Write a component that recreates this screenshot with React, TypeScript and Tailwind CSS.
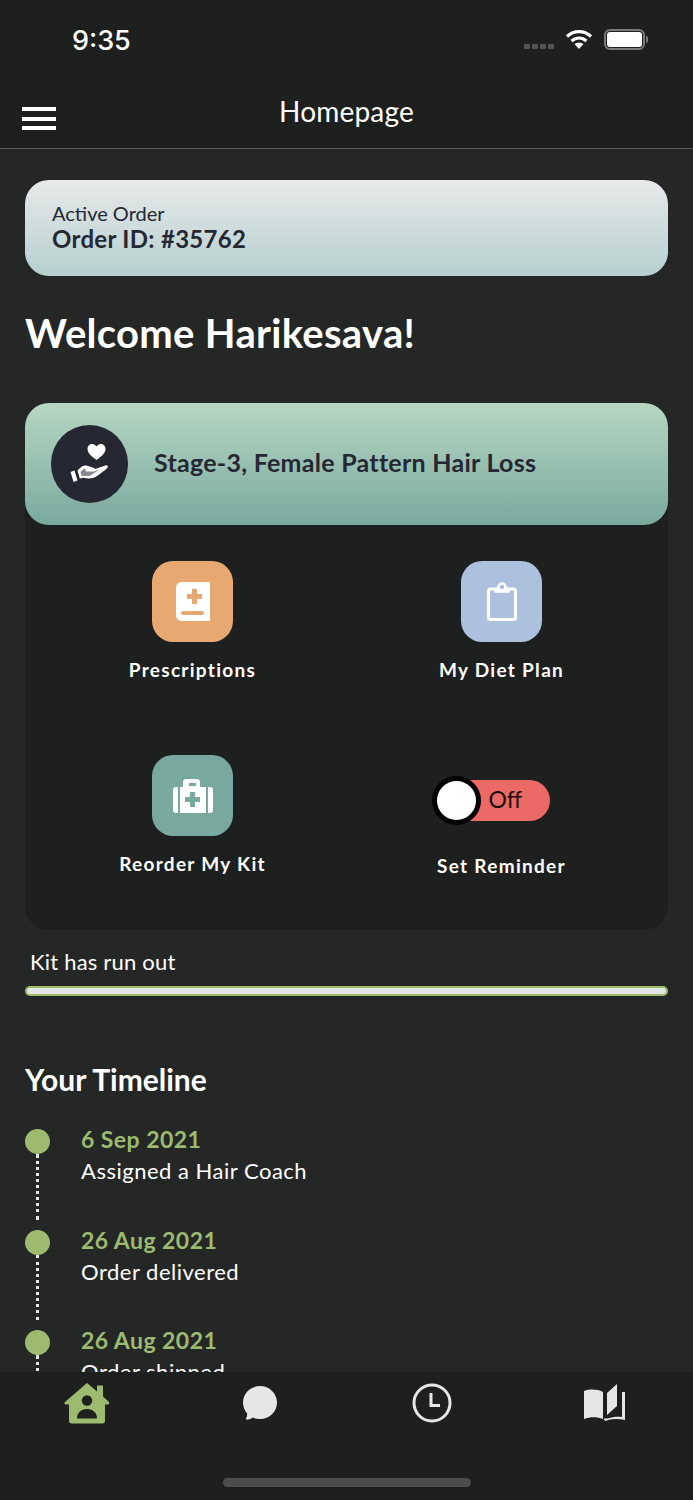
import React from 'react';

const font = { fontFamily: 'Lato, "Noto Sans", sans-serif' };

function Wifi() {
  return (
    <svg width="28" height="22" viewBox="0 0 28 22" fill="none" stroke="white" strokeWidth="3.2">
      <path d="M2 8.500C9 2 19 2 26 8.500" />
      <path d="M6.500 13C11 9 17 9 21.500 13" />
      <path d="M14 21l-4.500-5c2.600-1.800 6.400-1.800 9 0z" fill="white" stroke="none" />
    </svg>
  );
}

function Battery() {
  return (
    <div className="flex items-center gap-[1px]">
      <div className="w-[41px] h-[21px] rounded-[6px] border-2 border-[#7a7a7a] p-[1px]">
        <div className="w-full h-full rounded-[3px] bg-white" />
      </div>
      <div className="w-[2px] h-[7px] rounded-r-sm bg-[#7a7a7a]" />
    </div>
  );
}

function StatusBar() {
  return (
    <div className="h-[80px] flex items-start justify-between pl-[72px] pr-[45px] pt-[24px]">
      <span className="text-[27px] leading-[33px] font-medium text-white font-['Inter']">9:35</span>
      <div className="flex items-end gap-[11px] pt-[4px]">
        <div className="flex gap-[2px] mb-[1px]">
          {[0, 1, 2, 3].map((i) => (
            <div key={i} className="w-[6px] h-[5px] rounded-[1px] bg-[#555]" />
          ))}
        </div>
        <Wifi />
        <Battery />
      </div>
    </div>
  );
}

function Header() {
  return (
    <div className="relative h-[69px] border-b border-[#5c5e5e] flex justify-center">
      <button className="absolute left-[22px] top-[27px] flex flex-col gap-[5.5px]">
        <span className="block w-[34px] h-[4px] bg-white" />
        <span className="block w-[34px] h-[4px] bg-white" />
        <span className="block w-[34px] h-[4px] bg-white" />
      </button>
      <h1 className="text-[28px] leading-[34px] pt-[14px] tracking-[0.2px] text-white" style={font}>Homepage</h1>
    </div>
  );
}

function HandHeart() {
  return (
    <svg width="42" height="42" viewBox="0 0 42 42" fill="white">
      <path d="M27.500 17c-1.500-1.500-9-5.500-9-11 0-3 2.200-5 4.700-5 1.800 0 3.300 1 4.300 2.500 1-1.500 2.500-2.500 4.300-2.500 2.500 0 4.700 2 4.700 5 0 5.500-7.500 9.500-9 11z" />
      <path d="M1.500 29l4-1.500 3 10-4 1.500z" />
      <path d="M8.500 27.500c3-3.500 6-5.500 9-5l7.500 2.500c.5.200 1 .5 1.300 1l10-3.500c2-.7 3.500 1 2 2.500-4 3.500-9 7.500-13 9.500-3 1.300-7 1-11 .3l-3.500.8z" />
      <path d="M17 28.500h7.500l6-2-9 6c-3 .8-6 .5-9 .2l-1-3.700c1.500-1.700 3-3 4.500-3.500z" fill="#252833" opacity="0.55" />
    </svg>
  );
}

function BookIcon() {
  return (
    <svg width="34" height="39" viewBox="0 0 34 39">
      <path d="M6 0h28v39H6c-3.500 0-6-2.500-6-6V6c0-3.500 2.500-6 6-6z" fill="white" />
      <path d="M16 7h5v5h5v5h-5v5h-5v-5h-5v-5h5z" fill="#e8a871" />
      <rect x="5" y="29" width="23" height="4" rx="2" fill="#e8a871" />
    </svg>
  );
}

function ClipboardIcon() {
  return (
    <svg width="30" height="39" viewBox="0 0 30 39" fill="none" stroke="white" strokeWidth="3" strokeLinejoin="round">
      <rect x="1.500" y="7" width="27" height="30.500" rx="2" />
      <path d="M8 6.500h14v3.500H8z" fill="white" strokeWidth="1.500" />
      <circle cx="15" cy="5" r="3.500" fill="#adc0de" strokeWidth="2.500" />
    </svg>
  );
}

function KitIcon() {
  return (
    <svg width="40" height="34" viewBox="0 0 40 34" fill="white">
      <path fillRule="evenodd" d="M13 0h11c2 0 3 1.500 3 3v5h-17V3c0-1.500 1-3 3-3zM16 4v3h7V4z" />
      <path d="M7 8h26v26H7z" />
      <path d="M0 11c0-2 1-3 3-3h2v26H3c-2 0-3-1-3-3zM40 11c0-2-1-3-3-3h-2v26h2c2 0 3-1 3-3z" />
      <path d="M17 13h5v5h5v5h-5v5h-5v-5h-5v-5h5z" fill="#79a99e" />
    </svg>
  );
}

function Tile({ color, label, children }: { color: string; label: string; children: React.ReactNode }) {
  return (
    <div className="flex flex-col items-center">
      <div className={`w-[81px] h-[81px] rounded-[21px] flex items-center justify-center ${color}`}>{children}</div>
      <span className="mt-[15px] text-[19px] leading-[26px] font-bold tracking-[1.3px] text-white" style={font}>{label}</span>
    </div>
  );
}

function ReminderToggle() {
  return (
    <div className="flex flex-col items-center">
      <div className="relative h-[49px] w-[118px] mt-[21px] mr-[22px] flex items-center">
        <div className="ml-[8px] w-[110px] h-[41px] rounded-full bg-[#ec6a65] pl-[49px] pb-[3px] flex items-center">
          <span className="text-[23px] text-[#1a0b0b]" style={font}>Off</span>
        </div>
        <div className="absolute left-0 top-0 w-[49px] h-[49px] rounded-full bg-white border-[5px] border-black" />
      </div>
      <span className="mt-[28px] text-[19px] leading-[26px] font-bold tracking-[1.3px] text-white" style={font}>Set Reminder</span>
    </div>
  );
}

const events = [
  { date: '6 Sep 2021', text: 'Assigned a Hair Coach' },
  { date: '26 Aug 2021', text: 'Order delivered' },
  { date: '26 Aug 2021', text: 'Order shipped' },
];

function Timeline() {
  return (
    <div className="mt-[65px]">
      <h2 className="text-[30px] leading-[36px] font-bold text-white" style={font}>Your Timeline</h2>
      <div className="mt-[27px] flex flex-col">
        {events.map((e) => (
          <div key={e.text} className="h-[100.5px] flex gap-[31px]">
            <div className="w-[25px] flex flex-col items-center pt-[5px]">
              <div className="w-[25px] h-[25px] shrink-0 rounded-full bg-[#9cbb6f]" />
              <div className="flex-1 mb-[5px] border-l-[3px] border-dotted border-[#e5e6e6]" />
            </div>
            <div>
              <div className="text-[23px] leading-[30px] font-bold tracking-[0.45px] text-[#9cbb6f]" style={font}>{e.date}</div>
              <div className="mt-[2px] text-[22px] leading-[30px] tracking-[0.5px] text-white" style={font}>{e.text}</div>
            </div>
          </div>
        ))}
      </div>
    </div>
  );
}

function BottomBar() {
  return (
    <div className="h-[128px] shrink-0 bg-[#1e2020] relative">
      <div className="flex items-start h-[56px] pt-[10px]">
        <div className="w-[173px] flex justify-center">
          <svg width="46" height="42" viewBox="0 0 46 42">
            <path d="M23 1L33 9.500V3.500h6v11l6 5.500c.8.800.2 2.500-1 2.500h-3v16.500c0 1.500-.8 2.500-2.500 2.500h-31C6 41.500 5 40.500 5 39V22.500H2c-1.500 0-2-1.500-1-2.500z" fill="#9cbb6f" />
            <circle cx="23" cy="18.500" r="5.200" fill="#1e2020" />
            <path d="M13 36.500c0-5.500 4-9.500 10-9.500s10 4 10 9.500z" fill="#1e2020" />
          </svg>
        </div>
        <div className="w-[174px] flex justify-center">
          <svg width="36" height="36" viewBox="0 0 36 36" className="mt-[3px]">
            <path d="M18 1c9.500 0 17 7.500 17 16.500S27.500 34 18 34c-3 0-5-.5-7-1.500-1.500 1-4 2-6 2.200-1 0-1.500-.7-1-1.500 1-1.500 1.300-3.500 1-5C2.500 25.500 1 21.500 1 17.500 1 8.500 8.500 1 18 1z" fill="#e5e6e6" />
          </svg>
        </div>
        <div className="w-[169px] flex justify-center">
          <svg width="40" height="40" viewBox="0 0 40 40" fill="none" stroke="#e5e6e6" strokeWidth="3" className="mt-[1px]">
            <circle cx="20" cy="20" r="18" />
            <path d="M19 10v12.500h9" strokeWidth="3" />
          </svg>
        </div>
        <div className="w-[177px] flex justify-center">
          <svg width="42" height="37" viewBox="0 0 42 37" fill="#e5e6e6" className="mt-[2px]">
            <path d="M0 7c6-2 13-2 19 1v27c-6-2.500-13-2.500-19 0z" />
            <path d="M23 9L33 0v22L23 31z" />
            <path d="M38 8h3v28c-6-1.500-12-1.500-17 0l-2 1-2-1v-1.500h4c4-1.500 9-2 14-1.500z" />
          </svg>
        </div>
      </div>
      <div className="absolute left-[223px] top-[106px] w-[248px] h-[9px] rounded-full bg-[#4d4d4d]" />
    </div>
  );
}

export default function App() {
  return (
    <div className="h-[1500px] w-[693px] flex flex-col overflow-hidden bg-[#252727]">
      <div className="shrink-0 bg-[#1e2020]">
        <StatusBar />
        <Header />
      </div>

      <main className="flex-1 min-h-0 overflow-hidden px-[25px] pt-[31px]">
        <div className="h-[96px] rounded-[24px] bg-gradient-to-b from-[#e8e9ea] to-[#b5d0cf] pl-[27px] pt-[22px]">
          <div className="text-[20px] leading-[23px] text-[#252833]" style={font}>Active Order</div>
          <div className="text-[24px] leading-[27px] font-bold tracking-[0.3px] text-[#252833]" style={font}>Order ID: #35762</div>
        </div>

        <h2 className="mt-[34px] text-[40px] leading-[46px] font-bold tracking-[0.3px] text-white" style={font}>Welcome Harikesava!</h2>

        <div className="mt-[47px] h-[527px] rounded-[24px] bg-[#1e2020]">
          <div className="h-[122px] rounded-[24px] bg-gradient-to-b from-[#b7d7c3] to-[#79a99e] flex items-center pl-[26px] gap-[26px]">
            <div className="w-[77px] h-[78px] rounded-full bg-[#252833] flex items-center justify-center">
              <HandHeart />
            </div>
            <span className="text-[25px] pb-[2px] font-bold tracking-[0.27px] text-[#252833]" style={font}>Stage-3, Female Pattern Hair Loss</span>
          </div>
          <div className="grid grid-cols-2 pt-[36px] pl-[13px] pr-[12px] gap-y-[72px]">
            <Tile color="bg-[#e8a871]" label="Prescriptions"><BookIcon /></Tile>
            <Tile color="bg-[#adc0de]" label="My Diet Plan"><ClipboardIcon /></Tile>
            <Tile color="bg-[#79a99e]" label="Reorder My Kit"><KitIcon /></Tile>
            <ReminderToggle />
          </div>
        </div>

        <div className="mt-[18px] pl-[5px] text-[22px] leading-[28px] tracking-[0.2px] text-white" style={font}>Kit has run out</div>
        <div className="mt-[10px] h-[10px] rounded-full bg-[#e5e6e6] border-2 border-[#9cbb6f]" />

        <Timeline />
      </main>

      <BottomBar />
    </div>
  );
}
